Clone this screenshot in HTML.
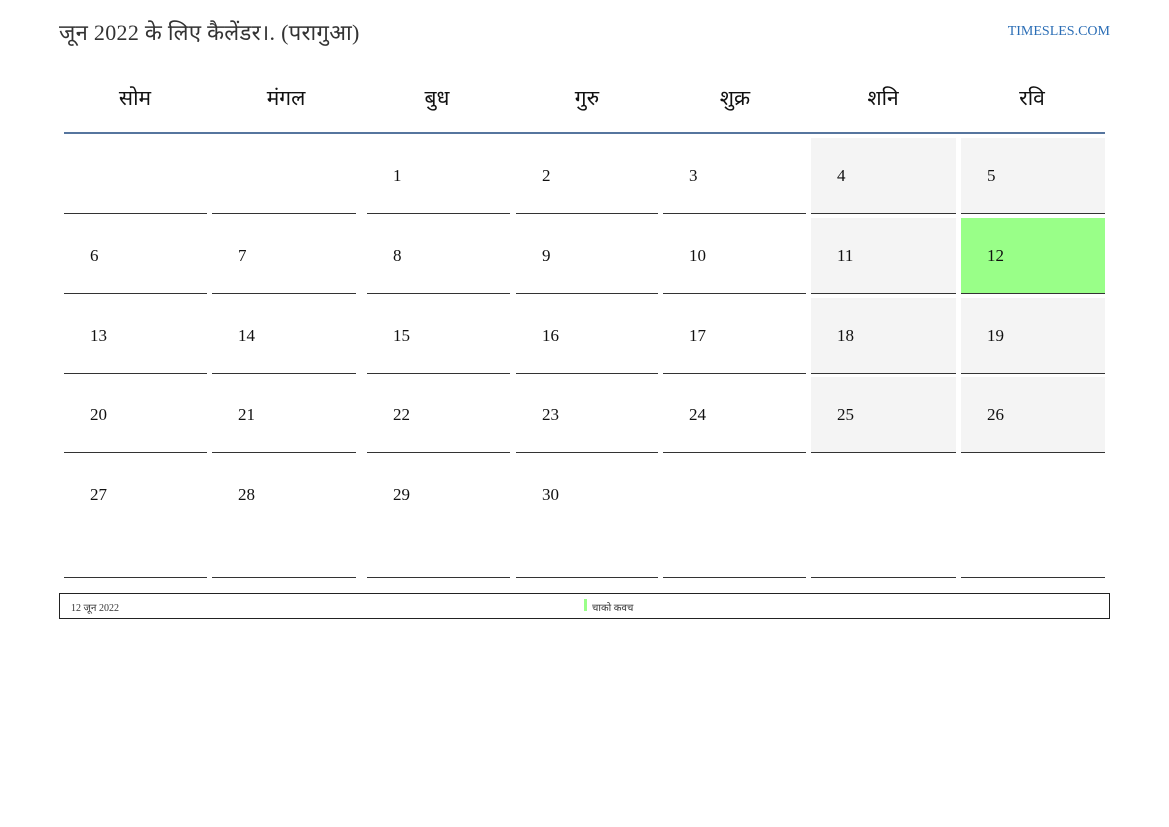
<!DOCTYPE html>
<html><head><meta charset="utf-8"><style>
body{margin:0;width:1169px;height:827px;background:#fff;position:relative;font-family:"Liberation Serif","Noto Serif CJK SC","Noto Sans CJK SC",serif;color:#111}
.t{position:absolute;left:59px;top:17px;font-size:22px;color:#333;letter-spacing:0.3px}
.s{position:absolute;right:59px;top:24px;font-size:14px;color:#2a6db5}
.h{position:absolute;top:84px;font-size:21px;width:140px;text-align:center;color:#111}
.hl{position:absolute;left:64px;width:1041px;top:132px;height:2px;background:#56759e}
.c{position:absolute;border-bottom:1px solid #333;box-sizing:border-box;font-size:17px}
.c span{position:absolute;left:26px;top:28px}
.g{background:#f4f4f4}.gr{background:#99ff88}
.f{position:absolute;left:59px;top:593px;width:1051px;height:26px;border:1px solid #222;box-sizing:border-box;font-size:10px;color:#333}
</style></head><body>
<div class="t">जून 2022 के लिए कैलेंडर।. (परागुआ)</div>
<div class="s">TIMESLES.COM</div>
<div class="h" style="left:65px">सोम</div>
<div class="h" style="left:216px">मंगल</div>
<div class="h" style="left:367px">बुध</div>
<div class="h" style="left:517px">गुरु</div>
<div class="h" style="left:665px">शुक्र</div>
<div class="h" style="left:813px">शनि</div>
<div class="h" style="left:962px">रवि</div>
<div class="hl"></div>
<div id="g"></div>
<script>
var xs=[[64,207],[212,356],[367,510],[516,658],[663,806],[811,956],[961,1105]];
var ys=[[138,214],[218,294],[298,374],[377,453],[457,578]];
var d=-2,h='';
for(var r=0;r<5;r++)for(var c=0;c<7;c++){d++;var x=xs[c],y=ys[r];
var cls='c';if(c>=5&&r<4)cls+=' g';if(d==12)cls+=' gr';
var txt=(d>=1&&d<=30)?'<span>'+d+'</span>':'';
h+='<div class="'+cls+'" style="left:'+x[0]+'px;width:'+(x[1]-x[0])+'px;top:'+y[0]+'px;height:'+(y[1]-y[0])+'px">'+txt+'</div>';}
document.getElementById('g').innerHTML=h;
</script>
<div class="f"><span style="position:absolute;left:11px;top:6px">12 जून 2022</span><span style="position:absolute;left:524px;top:5px;width:3px;height:12px;background:#99ff88"></span><span style="position:absolute;left:532px;top:6px">चाको कवच</span></div>
</body></html>
